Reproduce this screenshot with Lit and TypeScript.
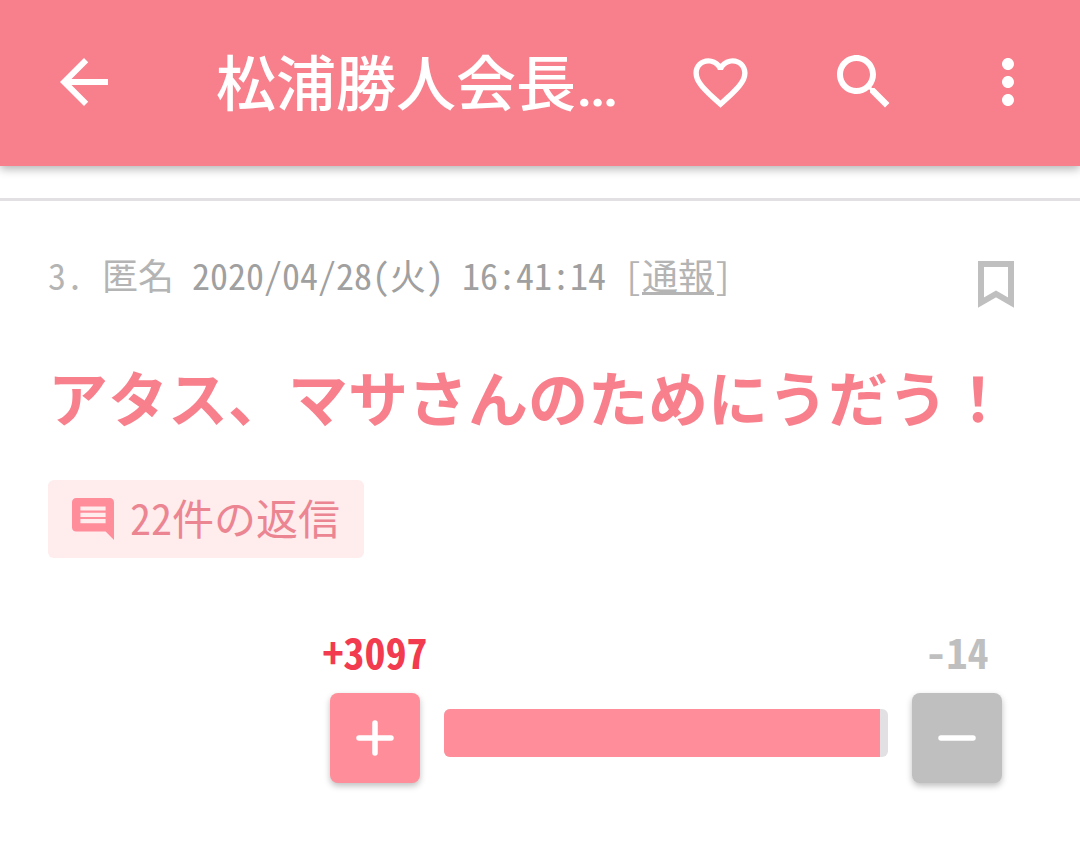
import { LitElement, html, css, svg } from "lit";
import { customElement, property } from "lit/decorators.js";

const icons = {
  back: svg`<path d="M20 11H7.83l5.59-5.59L12 4l-8 8 8 8 1.41-1.41L7.83 13H20v-2z"/>`,
  heart: svg`<path d="M16.5 3c-1.74 0-3.41.81-4.5 2.09C10.91 3.81 9.24 3 7.5 3 4.42 3 2 5.42 2 8.5c0 3.78 3.4 6.86 8.55 11.54L12 21.35l1.45-1.32C18.6 15.36 22 12.28 22 8.5 22 5.42 19.58 3 16.5 3zm-4.4 15.55l-.1.1-.1-.1C7.14 14.24 4 11.39 4 8.5 4 6.5 5.5 5 7.5 5c1.54 0 3.04.99 3.57 2.36h1.87C13.46 5.99 14.96 5 16.5 5c2 0 3.5 1.5 3.5 3.5 0 2.89-3.14 5.74-7.9 10.05z"/>`,
  search: svg`<path d="M15.5 14h-.79l-.28-.27C15.41 12.59 16 11.11 16 9.5 16 5.91 13.09 3 9.5 3S3 5.91 3 9.5 5.91 16 9.5 16c1.61 0 3.09-.59 4.23-1.57l.27.28v.79l5 4.99L20.49 19l-4.99-5zm-6 0C7.01 14 5 11.99 5 9.5S7.01 5 9.5 5 14 7.01 14 9.5 11.99 14 9.5 14z"/>`,
  more: svg`<path d="M12 8c1.1 0 2-.9 2-2s-.9-2-2-2-2 .9-2 2 .9 2 2 2zm0 2c-1.1 0-2 .9-2 2s.9 2 2 2 2-.9 2-2-.9-2-2-2zm0 6c-1.1 0-2 .9-2 2s.9 2 2 2 2-.9 2-2-.9-2-2-2z"/>`,
};

@customElement("app-bar")
class AppBar extends LitElement {
  @property() heading = "";

  static styles = css`
    :host {
      display: flex;
      align-items: center;
      box-sizing: border-box;
      height: 166px;
      padding-bottom: 2px;
      background: #f8808d;
      box-shadow: 0 3px 9px rgba(0, 0, 0, 0.3);
      color: #fff;
    }
    button {
      display: flex;
      flex: none;
      align-items: center;
      justify-content: center;
      width: 144px;
      height: 144px;
      padding: 0;
      border: 0;
      background: none;
      color: inherit;
    }
    .back {
      width: 168px;
    }
    svg {
      width: 72px;
      height: 72px;
      fill: currentColor;
    }
    .heart {
      width: 65px;
      height: 65px;
    }
    h1 {
      flex: 1;
      min-width: 0;
      margin: 0;
      padding: 8px 0 0 48px;
      overflow: hidden;
      font-size: 60px;
      font-weight: 500;
      line-height: 84px;
      white-space: nowrap;
    }
  `;

  render() {
    return html`
      <button class="back" aria-label="戻る"><svg viewBox="0 0 24 24">${icons.back}</svg></button>
      <h1>${this.heading}</h1>
      <button aria-label="お気に入り"><svg class="heart" viewBox="0 0 24 24">${icons.heart}</svg></button>
      <button aria-label="検索"><svg viewBox="0 0 24 24">${icons.search}</svg></button>
      <button aria-label="メニュー"><svg viewBox="0 0 24 24">${icons.more}</svg></button>
    `;
  }
}

@customElement("vote-bar")
class VoteBar extends LitElement {
  @property({ type: Number }) plus = 0;
  @property({ type: Number }) minus = 0;
  @property({ type: Number }) share = 100;

  static styles = css`
    :host {
      display: grid;
      grid-template-columns: 90px 1fr 90px;
      column-gap: 24px;
      row-gap: 12px;
      align-items: center;
      justify-items: center;
      max-width: 672px;
      margin-left: auto;
    }
    .count {
      font-size: 42px;
      font-weight: 700;
      line-height: 60px;
      white-space: nowrap;
    }
    .up {
      color: #f23b4e;
    }
    .down {
      grid-column: 3;
      color: #bfbfbf;
    }
    button {
      display: flex;
      align-items: center;
      justify-content: center;
      width: 90px;
      height: 90px;
      padding: 0;
      border: 0;
      border-radius: 8px;
      background: #ff8d9a;
      box-shadow: 0 3px 6px rgba(0, 0, 0, 0.25);
    }
    .against {
      background: #bfbfbf;
    }
    svg {
      width: 38px;
      height: 38px;
      fill: none;
      stroke: #fff;
      stroke-width: 5.5;
      stroke-linecap: round;
    }
    .track {
      width: 100%;
      height: 48px;
      margin-bottom: 10px;
      border-radius: 6px;
      background: #e3e0e3;
      overflow: hidden;
    }
    .fill {
      height: 100%;
      background: #ff8d9a;
    }
  `;

  render() {
    return html`
      <span class="count up">+${this.plus}</span>
      <span class="count down">-${this.minus}</span>
      <button aria-label="プラス"><svg viewBox="0 0 38 38"><path d="M3 19H35M19 4V34"/></svg></button>
      <div class="track"><div class="fill" style="width:${this.share}%"></div></div>
      <button class="against" aria-label="マイナス"><svg viewBox="0 0 38 38"><path d="M3 19H35"/></svg></button>
    `;
  }
}

@customElement("app-root")
class AppRoot extends LitElement {
  static styles = css`
    :host {
      display: block;
      min-height: 100vh;
      background: #fff;
      font-family: Roboto, "Noto Sans CJK JP", sans-serif;
    }
    article {
      margin-top: 32px;
      padding: 48px 48px 76px;
      border-top: 3px solid #e3e0e3;
      font-family: "Noto Sans Mono CJK JP", "Noto Sans CJK JP", sans-serif;
      font-feature-settings: "hwid";
    }
    .meta {
      display: flex;
      align-items: flex-start;
      justify-content: space-between;
      color: #b4b4b4;
      font-size: 36px;
      line-height: 50px;
      white-space: pre;
    }
    time {
      color: #a0a0a0;
    }
    .meta a {
      color: inherit;
      text-underline-offset: 2px;
      text-decoration-thickness: 3px;
    }
    .mark {
      display: flex;
      margin: 12px 18px 0 0;
      padding: 0;
      border: 0;
      background: none;
    }
    .mark svg {
      width: 36px;
      height: 47px;
      fill: none;
      stroke: #bfbfbf;
      stroke-width: 6;
    }
    h2 {
      margin: 46px 0 42px;
      color: #f8808d;
      font-size: 60px;
      font-weight: 700;
      font-feature-settings: normal;
      line-height: 84px;
    }
    .replies {
      display: flex;
      align-items: center;
      gap: 16px;
      height: 78px;
      padding: 0 24px;
      border: 0;
      border-radius: 6px;
      background: #ffeced;
      color: #ec8592;
      font: inherit;
      font-feature-settings: inherit;
      font-size: 42px;
      line-height: 60px;
    }
    .replies span {
      padding-bottom: 4px;
    }
    .replies svg {
      width: 42px;
      height: 42px;
      fill: #ff8d9a;
    }
    vote-bar {
      margin-top: 63px;
      margin-right: 30px;
    }
  `;

  render() {
    return html`
      <app-bar heading="松浦勝人会長…"></app-bar>
      <article lang="ja">
        <div class="meta">
          <span>3. 匿名 <time datetime="2020-04-28T16:41:14">2020/04/28(火) 16:41:14</time> [<a href="#report">通報</a>]</span>
          <button class="mark" aria-label="ブックマーク">
            <svg viewBox="0 0 36 47"><path d="M3 3H33V41.5L18 33L3 41.5Z"/></svg>
          </button>
        </div>
        <h2>アタス、マサさんのためにうだう！</h2>
        <button class="replies">
          <svg viewBox="2 2 20 20"><path d="M21.99 4c0-1.1-.89-2-1.99-2H4c-1.1 0-2 .9-2 2v12c0 1.1.9 2 2 2h14l4 4-.01-18zM18 14H6v-2h12v2zm0-3H6V9h12v2zm0-3H6V6h12v2z"/></svg>
          <span>22件の返信</span>
        </button>
        <vote-bar plus="3097" minus="14" share="98.2"></vote-bar>
      </article>
    `;
  }
}
